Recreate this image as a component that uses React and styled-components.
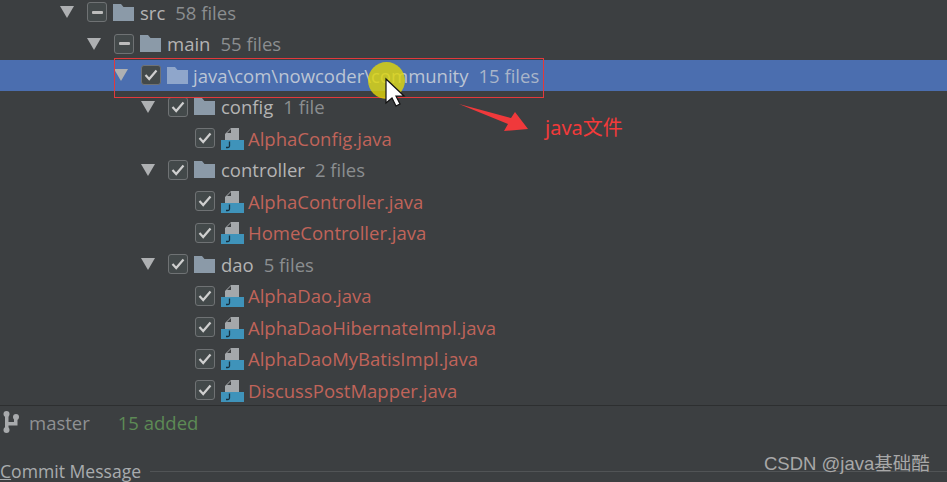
import React from 'react'
import styled, { createGlobalStyle } from 'styled-components'

const GlobalStyle = createGlobalStyle`
  html, body {
    margin: 0;
    padding: 0;
    background: #3c3f41;
  }
`

const Window = styled.div`
  position: relative;
  display: flex;
  flex-direction: column;
  width: 947px;
  height: 482px;
  overflow: hidden;
  background: #3c3f41;
  font-family: "Open Sans", "Noto Sans", sans-serif;
  font-size: 18.5px;
  color: #b4b4b4;
`

const Tree = styled.div`
  flex: none;
  height: 406px;
  overflow: hidden;
  box-sizing: border-box;
  border-bottom: 1px solid #2d2f30;
`

const TreeInner = styled.div`
  margin-top: -3.5px;
`

const Row = styled.div`
  display: flex;
  align-items: center;
  height: 31.5px;
  box-sizing: border-box;
  padding-left: ${p => 59 + p.$depth * 27}px;
  background: ${p => (p.$selected ? '#4b6eaf' : 'transparent')};
  color: ${p => (p.$selected ? '#bcc5d4' : '#b4b4b4')};
`

const ArrowSlot = styled.span`
  flex: none;
  display: flex;
  width: 28px;
  height: 14px;
`

const Check = styled.span`
  flex: none;
  display: flex;
  align-items: center;
  justify-content: center;
  box-sizing: border-box;
  width: 20px;
  height: 20px;
  margin-right: 6px;
  border: 1.5px solid #6f7274;
  border-radius: 3px;
  background: #43494a;
`

const Dash = styled.span`
  width: 11px;
  height: 3px;
  border-radius: 1px;
  background: #bcbcbc;
`

const FolderSlot = styled.span`
  flex: none;
  display: flex;
  width: 21px;
  margin-right: ${p => (p.$selected ? 5 : 6)}px;
`

const FileSlot = styled.span`
  flex: none;
  display: flex;
  width: 23px;
  margin-right: 4px;
`

const Name = styled.span`
  white-space: pre;
  color: ${p => (p.$changed ? '#c0645a' : 'inherit')};
`

const Count = styled.span`
  margin-left: 10px;
  white-space: pre;
  color: ${p => (p.$selected ? '#a9b5c9' : '#8b8e90')};
`

const StatusBar = styled.div`
  flex: none;
  display: flex;
  align-items: center;
  height: 32px;
  padding-left: 3px;
`

const Branch = styled.span`
  margin-left: 10px;
  color: #8f9193;
`

const Added = styled.span`
  margin-left: 28px;
  color: #5d8a55;
`

const CommitHeader = styled.div`
  display: flex;
  align-items: center;
  margin-top: 22px;
  height: 22px;
  font-size: 17.6px;
  color: #a9acae;
`

const Mnemonic = styled.span`
  text-decoration: underline;
`

const HeaderLine = styled.span`
  flex: 1;
  height: 1px;
  margin-left: 9px;
  background: #515456;
`

const Watermark = styled.div`
  position: absolute;
  left: 764px;
  top: 449px;
  font-family: "Liberation Sans", "Noto Sans CJK SC", sans-serif;
  font-size: 18.5px;
  color: #a8a8a8;
  white-space: nowrap;
`

const RedBox = styled.div`
  position: absolute;
  left: 114px;
  top: 58px;
  width: 430px;
  height: 40px;
  box-sizing: border-box;
  border: 1px solid #e2393c;
`

const Highlight = styled.div`
  position: absolute;
  left: 368px;
  top: 62px;
  width: 37px;
  height: 37px;
  border-radius: 50%;
  background: rgba(222, 212, 10, 0.82);
`

const Overlay = styled.svg`
  position: absolute;
  left: 0;
  top: 0;
  pointer-events: none;
`

const Note = styled.div`
  position: absolute;
  left: 545px;
  top: 112px;
  font-family: "Noto Sans", "Noto Sans CJK SC", sans-serif;
  font-size: 20px;
  color: #f23a3a;
  white-space: nowrap;
`

const Arrow = () => (
  <svg width="16" height="14" viewBox="0 0 16 14">
    <path d="M1 1h14L8 13z" fill="#aeb0b2" />
  </svg>
)

const Tick = () => (
  <svg width="14" height="12" viewBox="0 0 14 12">
    <path d="M1.5 6l3.7 4L12.5 1.5" fill="none" stroke="#cfcfcf" strokeWidth="2.2" />
  </svg>
)

const Folder = ({ selected }) => (
  <svg width="21" height="17" viewBox="0 0 21 17">
    <path d="M0 0h8l2.5 3H21v14H0z" fill={selected ? '#8fa6cb' : '#8b9aa8'} />
  </svg>
)

const JavaFile = () => (
  <svg width="23" height="23" viewBox="0 0 23 23">
    <path d="M4 13V7l6-6h8v12z" fill="#a4a8ab" />
    <path d="M6 6L10 2v4z" fill="#3c3f41" />
    <rect x="0" y="13" width="23" height="10" fill="#3f93ba" />
    <path d="M8.500 14.500v4.500q0 1.500-1.500 1.500H5" fill="none" stroke="#16303f" strokeWidth="1.300" />
  </svg>
)

const BranchIcon = () => (
  <svg width="16" height="22" viewBox="0 0 16 22">
    <g fill="#a8aaac">
      <circle cx="3.500" cy="3" r="3" />
      <circle cx="3.500" cy="19" r="3" />
      <circle cx="13" cy="6" r="3" />
      <rect x="2" y="3" width="3.500" height="16" />
      <path d="M3 11h8V6h3.500v8.500H3z" />
    </g>
  </svg>
)

const tree = [
  { depth: 0, name: 'src', count: '58 files', mixed: true },
  { depth: 1, name: 'main', count: '55 files', mixed: true },
  { depth: 2, name: 'java\\com\\nowcoder\\community', count: '15 files', selected: true },
  { depth: 3, name: 'config', count: '1 file' },
  { depth: 4, name: 'AlphaConfig.java', file: true },
  { depth: 3, name: 'controller', count: '2 files' },
  { depth: 4, name: 'AlphaController.java', file: true },
  { depth: 4, name: 'HomeController.java', file: true },
  { depth: 3, name: 'dao', count: '5 files' },
  { depth: 4, name: 'AlphaDao.java', file: true },
  { depth: 4, name: 'AlphaDaoHibernateImpl.java', file: true },
  { depth: 4, name: 'AlphaDaoMyBatisImpl.java', file: true },
  { depth: 4, name: 'DiscussPostMapper.java', file: true },
]

export default function App() {
  return (
    <Window>
      <GlobalStyle />
      <Tree>
        <TreeInner>
          {tree.map(item => (
            <Row key={item.name} $depth={item.depth} $selected={item.selected}>
              <ArrowSlot>{!item.file && <Arrow />}</ArrowSlot>
              <Check>{item.mixed ? <Dash /> : <Tick />}</Check>
              {item.file ? (
                <FileSlot><JavaFile /></FileSlot>
              ) : (
                <FolderSlot $selected={item.selected}><Folder selected={item.selected} /></FolderSlot>
              )}
              <Name $changed={item.file}>{item.name}</Name>
              {item.count && <Count $selected={item.selected}>{item.count}</Count>}
            </Row>
          ))}
        </TreeInner>
      </Tree>
      <StatusBar>
        <BranchIcon />
        <Branch>master</Branch>
        <Added>15 added</Added>
      </StatusBar>
      <CommitHeader>
        <span><Mnemonic>C</Mnemonic>ommit Message</span>
        <HeaderLine />
      </CommitHeader>

      <RedBox />
      <Highlight />
      <Overlay width="947" height="482" viewBox="0 0 947 482">
        <path d="M459 104L511 118L515 112L528 129L504 131L508 124z" fill="#f0393b" />
        <path d="M386 79v24l6-5 4 8 4-2-4-8h8z" fill="#fff" stroke="#111" strokeWidth="1.200" />
      </Overlay>
      <Note>java文件</Note>
      <Watermark>CSDN @java基础酷</Watermark>
    </Window>
  )
}
